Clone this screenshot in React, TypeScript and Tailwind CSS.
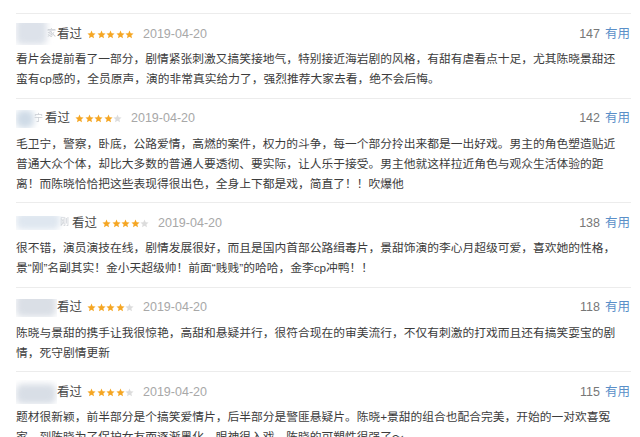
import React from "react";

type Review = {
	stars: number;
	votes: number;
	lines: string[];
	name: number; // width of the blurred name area, px
	blob: { w: number; h: number; color: string; mt: number };
	tail?: string;
};

const reviews: Review[] = [
	{
		stars: 5,
		votes: 147,
		name: 41,
		blob: { w: 31, h: 28, color: "#dde2ea", mt: -6 },
		tail: "家",
		lines: [
			"看片会提前看了一部分，剧情紧张刺激又搞笑接地气，特别接近海岩剧的风格，有甜有虐看点十足，尤其陈晓景甜还",
			"蛮有cp感的，全员原声，演的非常真实给力了，强烈推荐大家去看，绝不会后悔。",
		],
	},
	{
		stars: 4,
		votes: 142,
		name: 29,
		blob: { w: 18, h: 18, color: "#cfdbe7", mt: 0 },
		tail: "宁",
		lines: [
			"毛卫宁，警察，卧底，公路爱情，高燃的案件，权力的斗争，每一个部分拎出来都是一出好戏。男主的角色塑造贴近",
			"普通大众个体，却比大多数的普通人要透彻、要实际，让人乐于接受。男主他就这样拉近角色与观众生活体验的距",
			"离！而陈晓恰恰把这些表现得很出色，全身上下都是戏，简直了！！吹爆他",
		],
	},
	{
		stars: 4,
		votes: 138,
		name: 56,
		blob: { w: 44, h: 18, color: "#dfe7f0", mt: -4 },
		tail: "刚",
		lines: [
			"很不错，演员演技在线，剧情发展很好，而且是国内首部公路缉毒片，景甜饰演的李心月超级可爱，喜欢她的性格，",
			"景“刚”名副其实！金小天超级帅！前面“贱贱”的哈哈，金李cp冲鸭！！",
		],
	},
	{
		stars: 4,
		votes: 118,
		name: 41,
		blob: { w: 40, h: 24, color: "#dadfe6", mt: -6 },
		lines: [
			"陈晓与景甜的携手让我很惊艳，高甜和悬疑并行，很符合现在的审美流行，不仅有刺激的打戏而且还有搞笑耍宝的剧",
			"情，死守剧情更新",
		],
	},
	{
		stars: 4,
		votes: 115,
		name: 41,
		blob: { w: 40, h: 20, color: "#d8dee6", mt: 4 },
		lines: [
			"题材很新颖，前半部分是个搞笑爱情片，后半部分是警匪悬疑片。陈晓+景甜的组合也配合完美，开始的一对欢喜冤",
			"家，到陈晓为了保护女友而逐渐黑化，眼神很入戏，陈晓的可塑性很强了～",
		],
	},
];

function Star({ on }: { on: boolean }) {
	return (
		<svg width="9" height="9" viewBox="0 0 24 24" className="block">
			<path
				d="M12 1.5l3.1 7.1 7.7.7-5.8 5.1 1.7 7.6L12 18.1 5.3 22l1.7-7.6L1.2 9.3l7.7-.7z"
				fill={on ? "#f5a623" : "#dcdcdc"}
			/>
		</svg>
	);
}

function ReviewItem({ r }: { r: Review }) {
	return (
		<div className="border-t border-[#ececec] pt-[10px] pb-[8.5px]">
			<div className="flex h-[20px] items-center text-[12.5px]">
				{/* blurred user name */}
				<div className="flex shrink-0 items-center overflow-hidden" style={{ width: r.name }}>
					<div
						className="shrink-0 rounded-[6px] blur-[3px]"
						style={{ width: r.blob.w, height: r.blob.h, backgroundColor: r.blob.color, marginTop: r.blob.mt }}
					/>
					{r.tail && <span className="text-[9px] text-[#c8ccd2] blur-[0.6px]">{r.tail}</span>}
				</div>
				<span className="text-[#4a4a4a]">看过</span>
				<div className="ml-[5px] flex gap-[0.5px]">
					{[0, 1, 2, 3, 4].map((i) => (
						<Star key={i} on={i < r.stars} />
					))}
				</div>
				<span className="ml-[9px] text-[#a8a8a8]">2019-04-20</span>
				<div className="ml-auto flex items-center gap-[5px] pr-[1px]">
					<span className="text-[#777]">{r.votes}</span>
					<span className="text-[#5a8fc8]">有用</span>
				</div>
			</div>
			<div className="mt-[5px] text-[11.75px] leading-[20px] text-[#3c3c3c]">
				{r.lines.map((l, i) => (
					<div key={i} className="whitespace-nowrap">
						{l}
					</div>
				))}
			</div>
		</div>
	);
}

export default function App() {
	return (
		<div
			className="h-[437px] w-[640px] overflow-hidden bg-white pt-[13px] pl-[16px] pr-[9px]"
			style={{ fontFamily: '"Liberation Sans", "Noto Sans CJK SC", sans-serif' }}
		>
			{reviews.map((r, i) => (
				<ReviewItem key={i} r={r} />
			))}
		</div>
	);
}
